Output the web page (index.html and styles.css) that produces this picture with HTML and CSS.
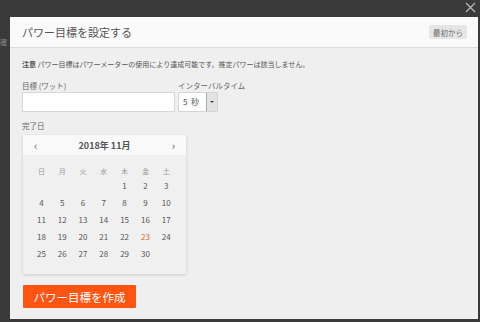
FILE: index.html
```html
<!DOCTYPE html>
<html lang="ja">
<head>
  <meta charset="UTF-8" />
  <meta name="viewport" content="width=device-width, initial-scale=1.0"/>
  <title>パワー目標を設定する</title>
  <link rel="stylesheet" href="styles.css">
</head>
<body>

  <div class="behind">確</div>
  <svg class="close" width="11" height="11" viewBox="0 0 11 11">
    <path d="M1 1 L10 10 M10 1 L1 10" stroke="#bbb" stroke-width="1.2" fill="none"/>
  </svg>

  <div class="modal">
    <div class="modal-head">
      <h1>パワー目標を設定する</h1>
      <button class="reset">最初から</button>
    </div>

    <div class="modal-body">
      <p class="note"><b>注意</b> パワー目標はパワーメーターの使用により達成可能です。推定パワーは該当しません。</p>

      <div class="fields">
        <div class="field">
          <label for="watts">目標 (ワット)</label>
          <input type="text" id="watts" class="watts">
        </div>
        <div class="field">
          <label>インターバルタイム</label>
          <div class="select">
            <span class="select-val">5 &nbsp;秒</span>
            <span class="select-btn"><i></i></span>
          </div>
        </div>
      </div>

      <label class="date-label">完了日</label>
      <div class="cal">
        <div class="cal-head">
          <span class="nav">&lsaquo;</span>
          <span class="month">2018年 11月</span>
          <span class="nav">&rsaquo;</span>
        </div>
        <div class="cal-grid" id="grid">
          <span class="wd">日</span><span class="wd">月</span><span class="wd">火</span><span class="wd">水</span><span class="wd">木</span><span class="wd">金</span><span class="wd">土</span>
        </div>
      </div>

      <button class="create">パワー目標を作成</button>
    </div>
  </div>

  <script>
    const grid = document.getElementById("grid");
    for (let i = 0; i < 4; i++) {
      grid.appendChild(document.createElement("span"));
    }
    for (let d = 1; d <= 30; d++) {
      const el = document.createElement("span");
      el.className = d === 23 ? "day today" : "day";
      el.innerText = d;
      grid.appendChild(el);
    }
  </script>
</body>
</html>
```

FILE: styles.css
```css
body {
  margin: 0;
  height: 322px;
  background-color: #3a3a3a;
  font-family: "Noto Sans CJK JP", "Liberation Sans", sans-serif;
  color: #555;
  position: relative;
  overflow: hidden;
  padding: 17px 0 0 10px;
  box-sizing: border-box;
}
.behind {
  position: absolute;
  left: 0;
  top: 37px;
  font-size: 7px;
  line-height: 10px;
  color: #888;
}
.close {
  position: absolute;
  right: 4px;
  top: 2px;
}
.modal {
  width: 468px;
  height: 302px;
  background: #efefef;
  display: flex;
  flex-direction: column;
}
.modal-head {
  height: 30px;
  background: #fafafa;
  border-bottom: 1px solid #dcdcdc;
  display: flex;
  align-items: center;
  justify-content: space-between;
  padding: 0 11px 0 12px;
}
h1 {
  margin: 0;
  font-size: 11px;
  font-weight: 400;
  color: #555;
}
.reset {
  border: none;
  background: #e6e6e6;
  font-family: inherit;
  font-size: 7.5px;
  color: #666;
  padding: 0 4px;
  height: 14px;
  border-radius: 2px;
}
.modal-body {
  padding: 10px 12px 0 12px;
}
.note {
  margin: 0 0 11px;
  font-size: 7px;
  color: #555;
  line-height: 12px;
}
.note b {
  font-weight: 700;
}
.fields {
  display: flex;
  gap: 3px;
}
.field label, .date-label {
  display: block;
  font-size: 7.5px;
  color: #666;
  line-height: 10px;
  margin-bottom: 1px;
}
.watts {
  display: block;
  width: 153px;
  height: 20px;
  box-sizing: border-box;
  border: 1px solid #d6d6d6;
  background: #fff;
  margin: 0;
}
.select {
  width: 40px;
  height: 20px;
  box-sizing: border-box;
  border: 1px solid #d6d6d6;
  background: #fff;
  display: flex;
}
.select-val {
  flex: 1;
  font-size: 8px;
  line-height: 18px;
  padding-left: 4px;
  color: #555;
}
.select-btn {
  width: 10px;
  background: #e2e2e2;
  border-left: 1px solid #aaa;
  display: flex;
  align-items: center;
  justify-content: center;
}
.select-btn i {
  border-left: 2px solid transparent;
  border-right: 2px solid transparent;
  border-top: 2px solid #444;
}
.date-label {
  margin-top: 9px;
  margin-bottom: 4px;
}
.cal {
  width: 163px;
  margin-left: 1px;
  background: #f0f0f0;
  box-shadow: 0 1px 3px rgba(0,0,0,0.15);
  padding-bottom: 12px;
}
.cal-head {
  height: 20px;
  background: #f9f9f9;
  display: flex;
  align-items: center;
  justify-content: space-between;
  padding: 0 11px;
}
.month {
  font-size: 9px;
  font-weight: 700;
  color: #555;
}
.nav {
  font-size: 11px;
  color: #555;
}
.cal-grid {
  display: grid;
  grid-template-columns: repeat(7, 20.8px);
  grid-template-rows: 12px;
  grid-auto-rows: 17px;
  padding: 10px 0 0 8px;
  font-size: 8px;
  text-align: center;
  line-height: 17px;
}
.wd {
  color: #999;
  font-size: 7px;
  line-height: 12px;
}
.day {
  color: #555;
}
.today {
  color: #e0602a;
}
.create {
  margin-top: 11px;
  margin-left: 1px;
  width: 113px;
  height: 23px;
  border: none;
  border-radius: 1px;
  background: #ff5412;
  color: #fff;
  font-family: inherit;
  font-size: 11.5px;
  padding: 0;
}
```
